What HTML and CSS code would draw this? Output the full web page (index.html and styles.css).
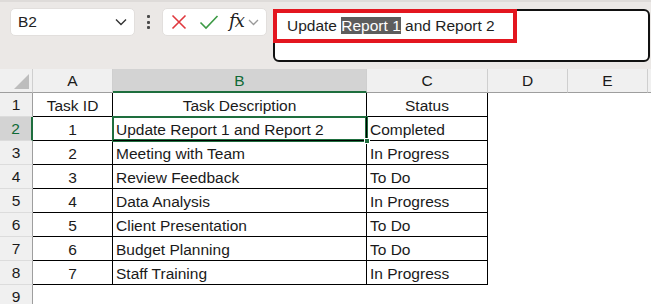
FILE: index.html
```html
<!DOCTYPE html>
<html>
<head>
<meta charset="utf-8">
<link rel="stylesheet" href="styles.css">
</head>
<body>
<div class="toolbar">
  <div class="namebox">
    <span class="nb-text">B2</span>
    <svg class="nb-chev" width="12" height="8" viewBox="0 0 12 8"><path d="M1 1.5 L6 6.5 L11 1.5" fill="none" stroke="#333" stroke-width="1.4"/></svg>
  </div>
  <div class="dots"><span></span><span></span><span></span></div>
  <div class="fxbox">
    <svg class="ic-x" width="16" height="16" viewBox="0 0 16 16"><path d="M1.5 1.5 L14.5 14.5 M14.5 1.5 L1.5 14.5" stroke="#e0383e" stroke-width="1.6" fill="none"/></svg>
    <svg class="ic-check" width="20" height="16" viewBox="0 0 20 16"><path d="M1.5 8.5 L7 14 L18.5 2" stroke="#3c9a45" stroke-width="1.6" fill="none"/></svg>
    <span class="fx">fx</span>
    <svg class="ic-chev" width="11" height="7" viewBox="0 0 11 7"><path d="M1 1 L5.5 5.5 L10 1" fill="none" stroke="#9a9a9a" stroke-width="1.3"/></svg>
  </div>
  <div class="formula">
    <div class="annot"></div>
    <div class="ftext">Update <span class="hl">Report 1</span> and Report 2</div>
  </div>
</div>
<div class="sheet">
  <div class="h corner"><span class="tri"></span></div>
  <div class="h col">A</div>
  <div class="h col sel">B</div>
  <div class="h col">C</div>
  <div class="h col">D</div>
  <div class="h col">E</div>
  <div class="h col last"></div>

  <div class="h row">1</div>
  <div class="c t ctr">Task ID</div>
  <div class="c t ctr">Task Description</div>
  <div class="c t ctr">Status</div>
  <div class="c"></div><div class="c"></div><div class="c"></div>

  <div class="h row sel">2</div>
  <div class="c t ctr">1</div>
  <div class="c t active">Update Report 1 and Report 2<span class="handle"></span></div>
  <div class="c t">Completed</div>
  <div class="c"></div><div class="c"></div><div class="c"></div>

  <div class="h row">3</div>
  <div class="c t ctr">2</div>
  <div class="c t">Meeting with Team</div>
  <div class="c t">In Progress</div>
  <div class="c"></div><div class="c"></div><div class="c"></div>

  <div class="h row">4</div>
  <div class="c t ctr">3</div>
  <div class="c t">Review Feedback</div>
  <div class="c t">To Do</div>
  <div class="c"></div><div class="c"></div><div class="c"></div>

  <div class="h row">5</div>
  <div class="c t ctr">4</div>
  <div class="c t">Data Analysis</div>
  <div class="c t">In Progress</div>
  <div class="c"></div><div class="c"></div><div class="c"></div>

  <div class="h row">6</div>
  <div class="c t ctr">5</div>
  <div class="c t">Client Presentation</div>
  <div class="c t">To Do</div>
  <div class="c"></div><div class="c"></div><div class="c"></div>

  <div class="h row">7</div>
  <div class="c t ctr">6</div>
  <div class="c t">Budget Planning</div>
  <div class="c t">To Do</div>
  <div class="c"></div><div class="c"></div><div class="c"></div>

  <div class="h row">8</div>
  <div class="c t ctr">7</div>
  <div class="c t">Staff Training</div>
  <div class="c t">In Progress</div>
  <div class="c"></div><div class="c"></div><div class="c"></div>

  <div class="h row">9</div>
  <div class="c"></div><div class="c"></div><div class="c"></div>
  <div class="c"></div><div class="c"></div><div class="c"></div>
</div>
</body>
</html>
```
FILE: styles.css
```css
* { box-sizing: border-box; }
html, body { margin: 0; padding: 0; }
body {
  width: 651px;
  height: 304px;
  overflow: hidden;
  background: #ffffff;
  font-family: "Liberation Sans", Arial, sans-serif;
  color: #1a1a1a;
}
.toolbar {
  height: 69px;
  background: #ebe8e6;
  border-top: 2px solid #dedbd9;
  display: flex;
  align-items: flex-start;
  padding: 6px 1px 0 10px;
}
.namebox {
  width: 125px;
  height: 28px;
  background: #fff;
  border-radius: 5px;
  display: flex;
  align-items: center;
  justify-content: space-between;
  padding: 0 7px 0 7px;
  border: 1px solid #e2dfdd;
}
.nb-text { font-size: 15.5px; color: #222; }
.dots {
  width: 27px;
  height: 28px;
  display: flex;
  flex-direction: column;
  align-items: center;
  justify-content: center;
  gap: 2.5px;
}
.dots span { width: 3px; height: 3px; background: #4a4a4a; border-radius: 1px; }
.fxbox {
  width: 105px;
  height: 28px;
  background: #fff;
  border-radius: 5px;
  border: 1px solid #e2dfdd;
  display: flex;
  align-items: center;
  padding-left: 8px;
}
.ic-x { margin-right: 12px; }
.ic-check { margin-right: 10px; }
.fx {
  font-family: "DejaVu Serif", "Liberation Serif", serif;
  font-style: italic;
  font-size: 18px;
  color: #222;
  margin-right: 4px;
  margin-top: -3px;
  letter-spacing: -1px;
}
.formula {
  position: relative;
  flex: 1;
  margin-left: 6px;
  margin-top: 1px;
  height: 53px;
  background: #fff;
  border: 2px solid #111;
  border-radius: 6px;
}
.annot {
  position: absolute;
  left: -2px;
  top: -2px;
  width: 244px;
  height: 34px;
  border: 4px solid #e3161f;
}
.ftext {
  position: relative;
  padding: 4px 0 0 12px;
  font-size: 15.5px;
  line-height: 21px;
  color: #1e1e1e;
}
.hl { background: #5d5d5d; color: #fff; }

.sheet {
  display: grid;
  grid-template-columns: 33px 80px 254px 121px 80px 80px 1fr;
  grid-auto-rows: 24px;
}
.h {
  background: #f0f0f0;
  font-size: 15.5px;
  color: #1a1a1a;
  display: flex;
  align-items: center;
  justify-content: center;
}
.col {
  border-right: 1px solid #cfcfcf;
  border-bottom: 1px solid #9e9e9e;
  padding-top: 1px;
}
.col.last { border-right: none; }
.corner {
  position: relative;
  border-right: 1px solid #cfcfcf;
  border-bottom: 1px solid #9e9e9e;
}
.tri {
  position: absolute;
  right: 3px;
  bottom: 3px;
  width: 0;
  height: 0;
  border-left: 15px solid transparent;
  border-bottom: 15px solid #bdbdbd;
}
.row {
  border-right: 1px solid #9e9e9e;
  border-bottom: 1px solid #dcdcdc;
}
.h.sel {
  background: #d3d3d3;
  color: #0f6a36;
}
.col.sel { border-bottom: 2px solid #1e6e3e; }
.row.sel { border-right: 2px solid #1e6e3e; }

.c { background: #fff; }
.t {
  position: relative;
  font-size: 15.5px;
  line-height: 23px;
  padding: 1px 0 0 3px;
  white-space: nowrap;
  border-right: 1px solid #000;
  border-bottom: 1px solid #000;
}
.ctr { text-align: center; padding-left: 0; }
.active { box-shadow: 0 0 0 1px #1e6e3e, inset 0 0 0 1px #1e6e3e; z-index: 1; }
.handle {
  position: absolute;
  right: -4px;
  bottom: -4px;
  width: 6px;
  height: 6px;
  background: #1e6e3e;
  border: 1px solid #fff;
}
```
